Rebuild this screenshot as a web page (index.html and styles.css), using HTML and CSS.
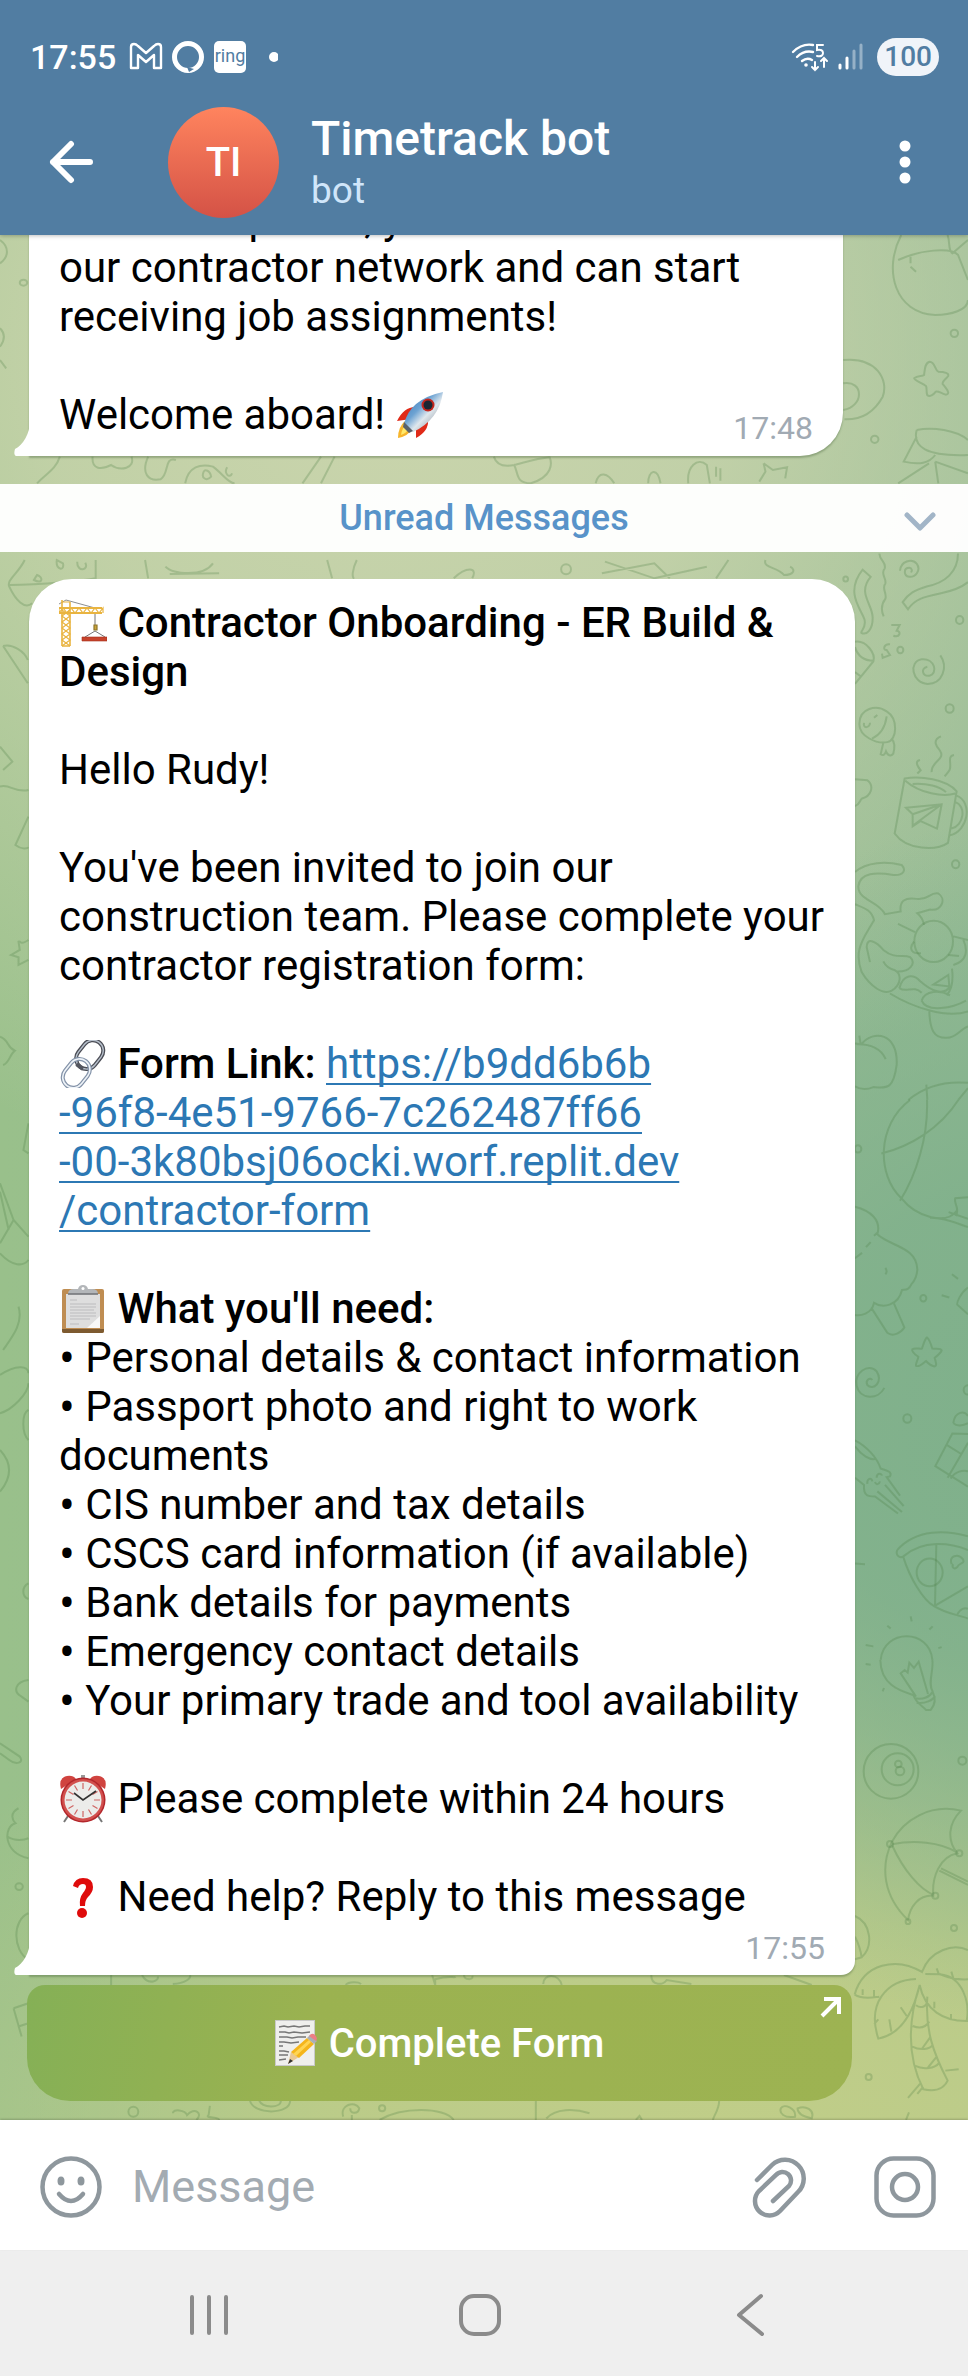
FILE: index.html
```html
<!DOCTYPE html>
<html lang="en">
<head>
<meta charset="utf-8">
<meta name="viewport" content="width=device-width, initial-scale=1">
<title>Timetrack bot</title>
<link rel="stylesheet" href="styles.css">
</head>
<body>
<div class="app">
  <header class="top">
    <div class="status">
      <span class="clock">17:55</span>
      <svg class="status-icons" width="150" height="38" viewBox="0 0 150 38" fill="none" stroke="#fff" aria-hidden="true">
        <path d="M3 30V9q0-3 3-3 2 0 4 2l8 7 8-7q2-2 4-2 3 0 3 3v21h-7V17l-8 7-8-7v13z" stroke-width="2.4" stroke-linejoin="round"/>
        <circle cx="60" cy="19" r="13.5" stroke-width="5"/>
        <path d="M57 30l3 5 6-3" fill="#fff" stroke="none"/><path d="M59 29l2 5 5-3" fill="#517da2" stroke="none"/>
        <rect x="86" y="3" width="32" height="32" rx="5" fill="#fff" stroke="none"/>
        <text x="102" y="24" text-anchor="middle" class="ring">ring</text>
        <circle cx="146" cy="19" r="4" fill="#fff" stroke-width="2"/>
      </svg>
      <span class="grow"></span>
      <svg width="72" height="38" viewBox="0 0 72 38" fill="none" stroke="#fff" stroke-width="2.4" stroke-linecap="round" aria-hidden="true">
        <path d="M2 14Q11 5 22 7M6 19q7-7 16-5M11 23q5-4 10-1"/>
        <circle cx="15" cy="27" r="1.8" fill="#fff" stroke="none"/>
        <path d="M32 7h-6v5q6-1 6 3t-6 3" stroke-width="2"/>
        <path d="M24 24v8m-3-3 3 3 3-3M33 29V20m-3 3 3-3 3 3" stroke-width="2"/>
        <path d="M49 27v3M56 20v10" stroke-width="3"/>
        <path d="M63 13v17M70 7v23" stroke-width="3" opacity=".4"/>
      </svg>
      <span class="battery">100</span>
    </div>
    <div class="bar">
      <button class="icon-btn" aria-label="Back">
        <svg width="44" height="44" viewBox="0 0 44 44" fill="none" stroke="#fff" stroke-width="6" stroke-linecap="round" stroke-linejoin="round"><path d="M41 22H4M22 4 4 22l18 18"/></svg>
      </button>
      <span class="avatar">TI</span>
      <div class="who">
        <h1>Timetrack bot</h1>
        <p>bot</p>
      </div>
      <button class="icon-btn" aria-label="More options">
        <svg width="12" height="44" viewBox="0 0 12 44" fill="#fff"><circle cx="6" cy="6" r="5.5"/><circle cx="6" cy="22" r="5.5"/><circle cx="6" cy="38" r="5.5"/></svg>
      </button>
    </div>
  </header>

  <main class="chat">
    <svg class="doodles" viewBox="0 235 968 1885" preserveAspectRatio="xMaxYMin slice" aria-hidden="true">
      <g transform="translate(0 220) scale(.6173 .3333)">
        <path d="M1460 45C1430 150 1450 280 1515 285 1540 285 1568 270 1568 240M1455 120C1490 90 1540 80 1552 105L1568 180M1535 45C1540 70 1535 90 1543 100L1568 60M1475 110V130M1475 140L1484 155"/>
        <path d="M1506 425C1515 425 1514 450 1520 455 1530 455 1538 460 1536 468 1532 478 1526 484 1527 492 1535 510 1540 522 1532 524 1524 520 1520 512 1516 515 1512 525 1506 532 1502 525 1500 512 1502 505 1500 498 1492 488 1482 482 1481 475 1486 466 1494 470 1497 465 1498 450 1498 428 1506 425Z"/>
        <path d="M1366 420C1420 410 1440 480 1430 530 1415 580 1395 600 1368 598M1366 490C1400 480 1400 560 1366 570M1485 630C1478 680 1500 710 1568 705M1485 630C1510 620 1550 630 1568 660M1485 650L1464 725C1490 735 1505 730 1515 705M1505 730L1455 790M1515 725L1568 760M1515 725L1520 790"/>
        <ellipse cx="1546" cy="340" rx="6" ry="11"/><ellipse cx="1417" cy="658" rx="6" ry="11"/>
        <path d="M0 60C15 80 15 110 0 130M0 325C8 340 8 360 0 380M0 420L10 445"/><ellipse cx="38" cy="188" rx="6" ry="9"/>
        <path d="M60 790C75 760 90 750 97 710M150 710C148 750 165 750 180 735 195 755 220 745 213 710M240 710C228 760 240 785 260 778 275 760 265 710 285 720M300 790C305 740 325 730 345 740 360 760 370 790 380 790M330 755C325 775 335 785 342 770 340 750 332 748 330 755M368 742C362 760 372 778 376 760M490 790L520 710M520 790L542 710M800 710C805 740 820 740 833 735 840 760 835 790 860 790 895 770 895 730 890 710M833 735C845 730 870 715 890 712M965 790C970 750 985 760 995 790M1050 790C1050 750 1065 740 1070 790M1115 790C1112 740 1130 710 1145 735L1150 790M1160 740V770M1167 745V782M1237 730L1240 755 1230 785M1237 730L1252 750 1275 742 1272 775"/>
      </g>
      <g transform="translate(0 560) scale(.6173 .3333)">
        <path d="M40 0C30 40 10 60 15 80 25 120 40 150 52 130M15 75C70 75 140 60 155 55V0M55 60C70 75 70 50 60 45ZM92 0C90 30 105 35 102 10ZM125 5C125 40 145 30 138 8M235 0L240 55M268 20C280 45 330 50 345 10M275 42L355 40M530 0L538 55M578 0C570 30 570 55 574 55M735 55C755 20 775 20 765 55M975 40L1060 10 1085 55M980 5L1060 55 1145 20M1160 55L1180 0M1240 0C1235 25 1260 20 1270 45 1285 45 1290 30 1280 20"/>
        <ellipse cx="917" cy="28" rx="8" ry="15"/>
        <path d="M5 258L45 370M5 258C20 250 40 275 45 300M0 560L20 605 5 630M0 680C15 670 25 700 46 690M46 770L25 855C35 870 45 865 46 862M46 1140C30 1160 35 1140 30 1145L32 1170 18 1185 30 1192V1215L46 1200"/>
      </g>
      <g transform="translate(0 1000) scale(.6173 .3333)">
        <path d="M0 110C15 120 10 140 24 152 15 165 15 190 5 195M46 370L38 450 46 460M0 550L22 660 46 710M0 575L14 690M0 760C20 800 38 800 46 780M22 660L0 730M30 920C38 970 20 1010 5 1050M0 1125C25 1095 46 1095 46 1120M0 1240C20 1230 46 1180 46 1150M46 1230C35 1240 35 1300 46 1320"/>
        <path d="M0 1350C20 1390 20 1430 0 1475M46 1750C35 1760 35 1790 46 1797M46 2040C25 2045 20 2075 35 2090L46 2105M0 2230L32 2270C40 2290 25 2295 15 2280L0 2260M30 2425C15 2440 20 2460 25 2470 5 2480 5 2560 46 2575M12 2510C25 2525 40 2520 46 2515"/>
        <ellipse cx="31" cy="2660" rx="6" ry="10"/>
        <path d="M46 2740C20 2760 20 2850 46 2880M22 3025L46 3010M22 3025L35 3110M30 3080L46 3070"/>
      </g>
      <g transform="translate(0 1860) scale(.6173 .3333)">
        <path d="M180 345V375M230 345C240 380 260 360 255 350M280 372C300 370 310 355 308 345M560 375C565 365 580 365 585 372M700 345L705 375V358C730 345 735 355 738 350M752 345C750 360 768 362 765 348M880 372C880 340 905 340 910 375M1055 345C1055 380 1075 375 1080 360L1120 372M1270 345L1315 375"/>
        <path d="M405 722C410 765 470 765 470 722M420 722C425 745 455 745 455 722M340 738L338 765C330 775 355 770 355 780M280 760C280 745 300 750 303 765 315 740 330 760 318 780M556 770C550 735 575 720 582 745 580 765 565 760 568 745M570 765V780M615 780C650 740 720 740 735 780M868 722V780M885 775C900 745 930 745 955 760M1030 780L1036 768 1040 780M1165 722C1165 750 1155 770 1155 780M1265 745C1270 730 1290 745 1288 770 1270 775 1262 760 1265 745ZM1292 745C1305 735 1320 750 1315 775 1300 770 1292 760 1292 745Z"/>
        <ellipse cx="216" cy="755" rx="8" ry="15"/><ellipse cx="619" cy="745" rx="5" ry="9"/>
      </g>
      <g transform="translate(840 540) scale(.3333 .3571)">
        <path d="M118 38C120 60 140 62 134 80 120 95 140 105 136 122 124 135 142 150 136 165 124 180 122 195 131 214M68 83L92 103C50 150 100 180 98 220 98 250 80 268 64 260 62 254 78 248 74 225 70 200 10 150 68 83ZM180 86C182 60 215 50 230 66 245 85 225 105 208 103 190 100 190 78 208 78 216 78 218 88 212 90M354 38C354 90 315 120 260 130 225 140 205 150 188 174L204 194C225 165 250 160 300 150 350 140 375 125 384 118"/>
        <circle cx="17" cy="109" r="7"/><circle cx="359" cy="224" r="11"/><circle cx="181" cy="308" r="9"/><circle cx="329" cy="472" r="12"/><circle cx="347" cy="908" r="11"/>
        <path d="M154 238L179 238 170 254C185 256 180 274 160 268M150 292C130 290 128 310 140 308L150 322 128 330 126 318M45 285C80 280 108 320 100 340L45 403M45 300C55 330 80 338 100 338M45 370L64 383M301 323C325 355 308 403 263 403 215 400 205 340 245 334 285 330 295 375 268 380 248 382 240 360 262 355"/>
        <path d="M58 515C58 470 110 460 140 480 175 500 172 560 142 566 110 572 58 550 58 515ZM140 494C135 530 115 548 96 556M72 512C68 530 90 526 90 512M102 498L112 490M130 568L122 600C130 605 135 600 138 592 145 608 155 604 160 598 165 580 163 565 156 558"/>
        <path d="M194 668L164 822C200 870 290 870 324 848L350 704C320 670 240 660 194 668ZM196 674C240 710 310 720 346 710M218 683C260 680 300 690 318 706M350 716C400 735 384 815 330 827M346 734C380 745 372 800 334 808M198 750L305 740 291 808 242 787 218 802V768ZM305 740L218 768M305 740L218 800M303 550C275 560 290 580 300 590 318 615 272 620 275 650M342 602C318 605 340 635 326 648L314 662M240 616C220 620 238 640 242 645L232 654"/>
        <path d="M45 670L82 673C105 690 92 718 66 724 58 730 60 740 45 745M45 930C80 900 140 900 185 910 200 925 190 940 160 938 110 930 60 930 55 970 55 1010 115 1010 135 1048L182 1040C178 1010 195 1000 230 1005 265 1010 270 985 295 990 320 1005 305 1040 270 1035L232 1045C245 1055 250 1065 252 1078M45 1020C70 1030 95 1035 102 1065L86 1090C60 1130 45 1160 65 1210 90 1250 130 1275 155 1262 185 1245 185 1215 165 1205 145 1200 135 1190 130 1180M90 1182L80 1140C80 1110 110 1125 130 1148 165 1175 190 1160 210 1168 230 1185 210 1210 170 1208M174 1075L225 1098M340 1110L384 1120M325 1162L357 1165M222 1125C205 1145 215 1160 243 1157"/>
        <circle cx="281" cy="1124" r="58"/>
        <path d="M150 1270C220 1310 320 1340 384 1320M178 1255C190 1215 220 1215 240 1235 270 1260 310 1280 330 1250M178 1255C200 1270 220 1245 245 1268M245 1290C255 1260 300 1260 330 1275M245 1290C260 1325 340 1310 378 1290M268 1320C270 1370 280 1395 320 1394 350 1394 360 1370 384 1362M340 1190C380 1180 385 1150 370 1120M336 1200C340 1230 335 1260 320 1275M280 1245L325 1218 328 1250Z"/>
        <path d="M45 1410L64 1412C100 1370 175 1380 170 1470 160 1540 140 1535 100 1532 80 1540 60 1538 45 1530M50 1412C90 1410 125 1425 137 1454M58 1388L62 1412M205 1568C260 1525 320 1515 384 1520M259 1525L262 1568M384 1535L355 1568"/>
      </g>
      <g transform="translate(840 1100) scale(.3333 .3571)">
        <path d="M210 0C110 70 110 210 184 275 230 330 320 350 350 310M261 0C265 100 230 210 180 282M355 0C300 80 210 130 124 150M384 272L346 275C340 290 360 300 348 325M270 330C310 328 350 345 384 356M326 314L384 333"/>
        <circle cx="54" cy="137" r="10"/><circle cx="250" cy="555" r="9"/><circle cx="202" cy="892" r="12"/><circle cx="384" cy="812" r="13"/><circle cx="269" cy="1323" r="39"/>
        <path d="M45 299C90 310 125 335 112 376 150 410 230 410 232 475 230 500 220 510 215 515 205 535 195 530 186 532 175 575 130 585 102 568 95 600 60 605 45 602M96 585L142 652C160 665 185 650 193 637L162 570M45 443L66 428M78 412L92 398M102 380L112 372M136 470C142 478 140 484 136 488M336 488L354 501M305 547L328 553M384 525C360 540 350 570 352 573L384 600"/>
        <path d="M261 665C266 668 275 690 277 696 290 698 302 695 305 701 303 710 288 718 284 722 288 735 292 745 283 746 275 745 262 735 258 731 248 738 235 750 228 744 226 738 234 728 235 719 225 712 214 705 217 698 225 693 240 698 246 696 250 685 255 667 261 665ZM133 806C115 840 60 840 50 800 40 765 85 735 110 760 130 790 100 815 82 798 75 785 90 775 97 784"/>
        <path d="M45 953C80 970 110 1000 122 1032 140 1038 158 1040 150 1054L140 1056 180 1108M135 1078L191 1137M112 1096L186 1154M174 1158L105 1110C85 1110 70 1110 72 1078L45 1058M45 970C65 995 90 1010 108 1005M82 1075C80 1060 95 1055 97 1068M110 1058C110 1042 126 1046 125 1052M105 1070C108 1080 118 1076 120 1068"/>
        <path d="M384 935L337 934 286 1025 384 1083M320 966L365 992M384 960L323 1058M332 1060C345 1040 370 1035 384 1040M340 905C345 870 375 870 384 885M340 905C350 915 370 912 384 905"/>
        <path d="M172 1260C230 1200 320 1205 384 1222M172 1260C165 1275 180 1285 190 1278 250 1230 330 1240 384 1260M190 1280C210 1340 250 1400 280 1416 320 1440 350 1440 384 1452M289 1244L285 1416 384 1362M335 1300C325 1275 355 1270 368 1285 378 1300 355 1295 352 1308 340 1318 335 1305 340 1300M352 1440C360 1425 375 1420 384 1425M45 1298L75 1300M122 1568C130 1480 270 1480 277 1568M212 1446L215 1460M278 1474L268 1483M142 1472L152 1480M77 1526L100 1530M305 1532L295 1535"/>
      </g>
      <g transform="translate(840 1660) scale(.3333)">
        <path d="M121 0C122 80 190 95 220 105 228 130 250 140 258 150L272 150C290 130 285 110 278 95 262 70 282 30 277 0M228 110L182 40 194 30 203 38 208 8 222 24 236 5 264 102M224 115C250 120 270 110 278 95M230 128C255 132 280 120 285 108M77 12L92 14M132 84L128 94"/>
        <circle cx="153" cy="334" r="82"/><circle cx="173" cy="328" r="48"/><circle cx="175" cy="312" r="10"/><circle cx="180" cy="333" r="13"/><circle cx="367" cy="302" r="12"/>
        <path d="M363 452C270 430 190 480 156 545 120 620 130 710 204 780 210 740 235 705 280 707 275 650 300 590 352 580 320 540 325 490 363 452ZM156 553C220 540 300 545 352 578M156 555C190 630 240 690 282 705M303 625L384 665M298 632L384 675"/>
        <circle cx="150" cy="552" r="9"/><circle cx="358" cy="580" r="9"/><circle cx="286" cy="707" r="9"/><circle cx="204" cy="785" r="7"/><circle cx="342" cy="804" r="9"/><circle cx="86" cy="1251" r="9"/>
        <path d="M45 768C95 790 100 860 65 892L45 898M45 830C55 850 62 870 65 892M44 1004C70 910 170 890 246 936 270 870 340 850 384 870M44 1004C70 1020 100 1012 118 1010M228 957C140 960 80 1030 115 1136 170 1125 215 1080 239 975 255 1050 310 1085 384 1083M256 942L300 943C370 950 390 1030 380 1083M300 943C330 955 360 960 384 958M239 975C205 1080 200 1190 250 1288 280 1295 310 1290 323 1262 280 1180 255 1110 262 1010M228 1036C240 1045 255 1042 260 1030M218 1098C235 1105 255 1105 268 1085M217 1160C240 1172 270 1168 278 1155M226 1218C250 1230 285 1225 296 1210M272 1130L245 1168M290 1190L262 1225M68 988V1005M102 990V1010M148 1078L154 1115M182 1042L200 1068M115 1078L103 1092M290 925L297 944M334 935L340 955M283 1025V1045M333 1062V1076M204 1314L240 1272M232 1302L250 1280M316 1232L356 1228M207 1357L198 1380"/>
      </g>
    </svg>

    <article class="bubble bubble-old">
      <p>Once completed, you'll be added to<br>our contractor network and can start receiving job assignments!</p>
      <div class="last">
        <p>Welcome aboard! <svg class="emoji" viewBox="0 0 48 48" role="img" aria-label="rocket">
          <defs><linearGradient id="rk" x1="0" y1="0" x2="1" y2="1"><stop offset="0" stop-color="#2f6dae"/><stop offset=".4" stop-color="#6da3d3"/><stop offset=".58" stop-color="#dfe7ed"/><stop offset="1" stop-color="#6d7780"/></linearGradient></defs>
          <path d="M2 47q0-11 7-17l7 7Q13 45 2 47z" fill="#f7b52c"/><path d="M5 44q1-7 5-10l3 3q-2 5-8 7z" fill="#ffe96b"/>
          <path d="M19 16Q8 16 1 30l14-2zM32 29q1 11-12 18l0-14z" fill="#e02a18"/>
          <path d="M8 33Q14 8 47 1 43 29 17 41z" fill="url(#rk)"/><path d="M8 31l9 9-4 2-6-6z" fill="#5a626b"/>
          <circle cx="32" cy="14" r="6.500" fill="#c5271e"/><circle cx="32" cy="14" r="4.500" fill="#1b2733"/></svg></p>
        <time>17:48</time>
      </div>
      <svg class="tail" width="16" height="36" viewBox="0 0 16 36" aria-hidden="true"><path d="M16 0C16 14 9 25 1 29Q-1 36 3 36H16z" fill="#fff"/></svg>
    </article>

    <div class="unread">
      <span>Unread Messages</span>
      <svg width="32" height="20" viewBox="0 0 32 20" fill="none" stroke="#a2b5c7" stroke-width="5" stroke-linecap="round" stroke-linejoin="round" aria-hidden="true"><path d="M3 3l13 13L29 3"/></svg>
    </div>

    <article class="bubble bubble-new">
      <p><svg class="emoji" viewBox="0 0 48 48" role="img" aria-label="building construction" fill="none" stroke="#e9b440" stroke-width="1.2">
          <path d="M0 5L7 1 36 9" stroke="#8d8f90" stroke-width="1"/><path d="M3 47V1M11 47V3M3 47h8" stroke-width="1.6"/><path d="M3 47l8-6-8-6 8-6-8-6 8-6-8-6M11 47l-8-6 8-6-8-6 8-6-8-6 8-6M3 3h8"/>
          <path d="M0 9h43M0 14h43" stroke-width="1.8"/><path d="M0 14l4-5 4 5 4-5 4 5 4-5 4 5 4-5 4 5 4-5 4 5 4-5v5M0 9v5"/>
          <path d="M36 15v12m0 5l-10 6m10-6l10 6" stroke="#777" stroke-width="1"/><path d="M35 26h3v5h-3z" fill="#caa53b" stroke="#8d7429"/><path d="M23 38h25v4H23z" fill="#c7432c" stroke="#a52f1d" stroke-width=".6"/></svg>
        <b>Contractor Onboarding - ER Build &amp; Design</b></p>
      <p>Hello Rudy!</p>
      <p>You've been invited to join our construction team. Please complete your contractor registration form:</p>
      <p><svg class="emoji" viewBox="0 0 48 48" role="img" aria-label="link" fill="none">
          <g transform="rotate(-52 24 24)"><rect x="20" y="13" width="31" height="21" rx="10.500" stroke="#4b4d55" stroke-width="4"/><rect x="20" y="13" width="31" height="21" rx="10.500" stroke="#b7c0cc" stroke-width="1.4"/><rect x="-3" y="14" width="31" height="21" rx="10.500" stroke="#8392a8" stroke-width="4"/><rect x="-3" y="14" width="31" height="21" rx="10.500" stroke="#eef3f8" stroke-width="1.600"/><path d="M20 19v8" stroke="#53565f" stroke-width="4"/></g></svg>
        <b>Form Link:</b> <a href="#form">https://b9dd6b6b<br>-96f8-4e51-9766-7c262487ff66<br>-00-3k80bsj06ocki.worf.replit.dev<br>/contractor-form</a></p>
      <div class="para">
        <p><svg class="emoji" viewBox="0 0 48 48" role="img" aria-label="clipboard">
          <rect x="3" y="4" width="42" height="44" rx="2" fill="#bf8d52"/><path d="M3 44h42v2q0 2-2 2H5q-2 0-2-2z" fill="#7d5a30"/><path d="M7 9h34v34H7z" fill="#dedede"/><path d="M41 31v12H28z" fill="#f8f8f8"/>
          <path d="M11 15h7M11 19h26M11 22h26M11 25h24M11 28h26M11 31h26M11 34h20M11 39h9" stroke="#bcbcbe" stroke-width="1"/>
          <path d="M9 9q0-5 6-5h4q1-4 5-4t5 4h4q6 0 6 5z" fill="#b3b6b9"/><path d="M9 9h30" stroke="#74777a" stroke-width="1.6"/><circle cx="24" cy="3.500" r="1.500" fill="#fff"/></svg>
        <b>What you'll need:</b></p>
        <p><span class="dot">•</span> Personal details &amp; contact information</p>
        <p><span class="dot">•</span> Passport photo and right to work documents</p>
        <p><span class="dot">•</span> CIS number and tax details</p>
        <p><span class="dot">•</span> CSCS card information (if available)</p>
        <p><span class="dot">•</span> Bank details for payments</p>
        <p><span class="dot">•</span> Emergency contact details</p>
        <p><span class="dot">•</span> Your primary trade and tool availability</p>
      </div>
      <p><svg class="emoji" viewBox="0 0 48 48" role="img" aria-label="alarm clock">
          <path d="M9 41l-4 6M39 41l4 6" stroke="#777" stroke-width="2"/><path d="M22 0h4v4h-4z" fill="#999"/>
          <path d="M2 14Q-1 3 8 1q6-1 9 3zM46 14Q49 3 40 1q-6-1-9 3z" fill="#d0433f"/>
          <circle cx="24" cy="25" r="22.500" fill="#b3262b"/><circle cx="24" cy="25" r="21" fill="#d2504e"/><circle cx="24" cy="25" r="18.500" fill="#ececea"/>
          <path d="M24 8v6M24 36v6M7 25h6M35 25h6M15.500 10.500l3 5M32.500 10.500l-3 5M9.500 16.500l5 3M38.500 16.500l-5 3M9.500 33.500l5-3M38.500 33.500l-5-3M15.500 39.500l3-5M32.500 39.500l-3-5" stroke="#cf6563" stroke-width="1.2"/>
          <path d="M15 18l9 7 13-9" fill="none" stroke="#333" stroke-width="1.6"/></svg>
        Please complete within 24 hours</p>
      <p><svg class="emoji" viewBox="0 0 48 48" role="img" aria-label="question mark">
          <path d="M14 13q2-8 10-8 10 0 10 9 0 5-5 10-3 3-3 9h-5q-1-8 3-13 3-4 3-6 0-3-3-3-4 0-5 4z" fill="#df0b0b"/><circle cx="23" cy="40" r="5" fill="#df0b0b"/></svg>
        Need help? Reply to this message</p>
      <time>17:55</time>
      <svg class="tail" width="16" height="36" viewBox="0 0 16 36" aria-hidden="true"><path d="M16 0C16 14 9 25 1 29Q-1 36 3 36H16z" fill="#fff"/></svg>
    </article>

    <button class="complete">
      <svg class="emoji-sm" viewBox="0 0 42 46" aria-hidden="true">
        <path d="M0 0h40v46H0z" fill="#c9c9c9"/><path d="M1 1h38v44H1z" fill="#efefed"/>
        <path d="M4 7l5-1 4 1 6-1 5 1 6-1 5 0M4 12l6 0 4 1 5-1 8 1 8-1M4 17l8 0 5 1 6-1 8 0M4 22l5 0 7 1 8-1M4 26h4M4 31l5 0 5 1M4 35h9M4 40l7-1" stroke="#777" stroke-width="1.3" fill="none"/>
        <path d="M13 44l3-12 8 5z" fill="#e9c893"/><path d="M13 44l2-5 3 2z" fill="#333"/><path d="M16 32l16-14 7 6-15 14z" fill="#f5b51b"/><path d="M18 34l16-14 2 2-15 14z" fill="#ffd553"/><path d="M32 18l3-3 7 6-3 3z" fill="#aab0b4"/><path d="M34 16q3-4 6-1 3 3 1 6z" fill="#ed7f86"/>
      </svg>
      <span>Complete Form</span>
      <svg class="out" width="22" height="22" viewBox="0 0 22 22" fill="none" stroke="#fff" stroke-width="4" aria-hidden="true"><path d="M4 3h15v15M18 4L2 20"/></svg>
    </button>
  </main>

  <form class="composer">
    <button type="button" class="icon-btn" aria-label="Emoji">
      <svg width="62" height="62" viewBox="0 0 62 62" fill="none" stroke="#8e979d" stroke-width="4.500" stroke-linecap="round"><circle cx="31" cy="31" r="28.500"/><path d="M19 38q12 14 24 0"/><ellipse cx="21" cy="25" rx="3.500" ry="4.500" fill="#8e979d" stroke="none"/><ellipse cx="41" cy="25" rx="3.500" ry="4.500" fill="#8e979d" stroke="none"/></svg>
    </button>
    <input type="text" placeholder="Message" aria-label="Message">
    <button type="button" class="icon-btn" aria-label="Attach">
      <svg width="56" height="62" viewBox="0 0 56 62" fill="none" stroke="#8e979d" stroke-width="4.500" stroke-linecap="round"><path d="M5 24L20 9A18.500 18.500 0 0 1 46 36L28 55A14.500 14.500 0 0 1 7 35L24 19A8.500 8.500 0 0 1 37 30L21 45"/></svg>
    </button>
    <button type="button" class="icon-btn" aria-label="Record video">
      <svg width="62" height="62" viewBox="0 0 62 62" fill="none" stroke="#8e979d" stroke-width="4.500"><rect x="2.500" y="2.500" width="57" height="57" rx="17"/><circle cx="31" cy="31" r="13"/></svg>
    </button>
  </form>

  <nav class="sysnav">
    <button class="icon-btn" aria-label="Recent apps"><svg width="44" height="44" viewBox="0 0 44 44" stroke="#8b8b8b" stroke-width="4" stroke-linecap="round"><path d="M5 4v36M22 4v36M39 4v36"/></svg></button>
    <button class="icon-btn" aria-label="Home"><svg width="44" height="44" viewBox="0 0 44 44" fill="none" stroke="#8b8b8b" stroke-width="4"><rect x="3" y="3" width="38" height="38" rx="13"/></svg></button>
    <button class="icon-btn" aria-label="Back"><svg width="44" height="44" viewBox="0 0 44 44" fill="none" stroke="#8b8b8b" stroke-width="4" stroke-linecap="round" stroke-linejoin="round"><path d="M33 3L11 22l23 19"/></svg></button>
  </nav>
</div>
</body>
</html>
```
FILE: styles.css
```css
* { box-sizing: border-box; }
body { margin: 0; font-family: Roboto, "Noto Sans", sans-serif; color: #000; background: #efefef; }
p, h1 { margin: 0; }
button { border: 0; padding: 0; background: none; font: inherit; cursor: pointer; }
svg { display: block; flex: none; }

.app { display: flex; flex-direction: column; height: 100vh; }
.icon-btn { display: flex; align-items: center; justify-content: center; }
.grow { flex: 1; }

.top { flex: none; background: #517da2; color: #fff; position: relative; box-shadow: 0 1px 4px rgba(0, 0, 0, .25); z-index: 1; }
.status { display: flex; align-items: center; height: 89px; padding: 25px 29px 0 30px; }
.clock { font-size: 34px; font-weight: 500; line-height: 38px; margin-right: 12px; }
.ring { font: 18px Roboto, sans-serif; fill: #517da2; stroke: none; }
.battery { margin-left: 14px; padding: 0 7px; border-radius: 19px; background: #f0f4f9; color: #517da2; font-size: 28px; font-weight: 500; line-height: 38px; }
.bar { display: flex; align-items: center; height: 146px; padding: 0 57px 0 49px; }
.avatar { display: flex; align-items: center; justify-content: center; flex: none; width: 111px; height: 111px; margin: 0 32px 0 75px; border-radius: 50%; background: linear-gradient(#ff845e, #d45246); font-size: 40px; font-weight: 500; }
.who { flex: 1; }
.who h1 { font-size: 48px; font-weight: 500; line-height: 57px; }
.who p { font-size: 37px; line-height: 48px; color: #d0e6fa; }

.chat {
  position: relative; flex: 1; min-height: 0; overflow: hidden;
  display: flex; flex-direction: column; justify-content: flex-end; align-items: stretch;
  padding: 0 0 19px;
  background:
    radial-gradient(ellipse 60% 32% at 108% 63%, #7fb08b 0%, rgba(127, 176, 139, .85) 40%, rgba(127, 176, 139, 0) 100%),
    radial-gradient(ellipse 95% 32% at 75% 103%, #c1ce88 0%, rgba(193, 206, 136, .85) 45%, rgba(193, 206, 136, 0) 100%),
    radial-gradient(ellipse 90% 45% at 40% 6%, #cbd5ad 0%, rgba(203, 213, 173, .8) 40%, rgba(203, 213, 173, 0) 100%),
    linear-gradient(90deg, #99c08b, #94ba94);
}
.doodles { position: absolute; inset: 0; width: 100%; height: 100%; fill: none; stroke: rgba(75, 125, 65, .26); }
.doodles * { vector-effect: non-scaling-stroke; stroke-width: 2px; }

.bubble { position: relative; flex: none; background: #fff; font-size: 42px; line-height: 49px; box-shadow: 0 2px 2px rgba(60, 90, 50, .35); }
.bubble > * + p, .bubble > * + .para, .bubble > * + .last { margin-top: 49px; }
.bubble b { font-weight: 500; }
.bubble-old { margin: 0 125px 28px 29px; padding: 17px 30px; border-radius: 43px 43px 43px 0; }
.bubble-new { margin: 0 113px 10px 29px; padding: 19px 24px 5px 30px; border-radius: 43px 43px 14px 0; }
.bubble a { color: #2c78b4; text-decoration: underline; text-decoration-thickness: 2px; text-underline-offset: 5px; text-decoration-skip-ink: none; }
.bubble time { display: block; font-size: 32px; line-height: 43px; color: #a1aab3; text-align: right; }
.bubble-new time { margin: 6px 6px 0 0; }
.last { display: flex; justify-content: space-between; align-items: flex-end; }
.last time { margin-bottom: -11px; }
.dot { font-family: "Noto Sans", sans-serif; line-height: 1; }
.emoji { display: inline-block; width: 48px; height: 48px; vertical-align: -10px; }
.tail { position: absolute; left: -15px; bottom: 0; }

.unread { position: relative; flex: none; display: flex; align-items: center; justify-content: center; height: 68px; margin-bottom: 27px; background: rgba(255, 255, 255, .97); color: #5893c9; font-size: 36px; font-weight: 500; line-height: 44px; }
.unread svg { position: absolute; right: 32px; top: 28px; }

.complete { position: relative; flex: none; display: flex; align-items: center; justify-content: center; gap: 12px; height: 116px; margin: 0 116px 0 27px; border-radius: 18px 18px 43px 43px; background: linear-gradient(100deg, #85b056, #9bb250 35%, #9db352); color: #fff; font-size: 40px; font-weight: 500; }
.emoji-sm { width: 42px; height: 46px; }
.out { position: absolute; top: 11px; right: 10px; }

.composer { position: relative; flex: none; display: flex; align-items: center; height: 130px; margin: 0; padding: 4px 32px 0 40px; background: #fff; box-shadow: 0 -1px 2px rgba(0, 0, 0, .2); }
.composer input { flex: 1; min-width: 0; margin: 0 0 0 30px; padding: 0; border: 0; outline: 0; background: none; font: 45px/56px Roboto, sans-serif; color: #000; }
.composer input::placeholder { color: #a3abb2; opacity: 1; }
.composer .icon-btn + .icon-btn { margin-left: 66px; }

.sysnav { flex: none; display: flex; align-items: center; justify-content: space-between; height: 126px; padding: 4px 196px 0 187px; background: #efefef; }
```
